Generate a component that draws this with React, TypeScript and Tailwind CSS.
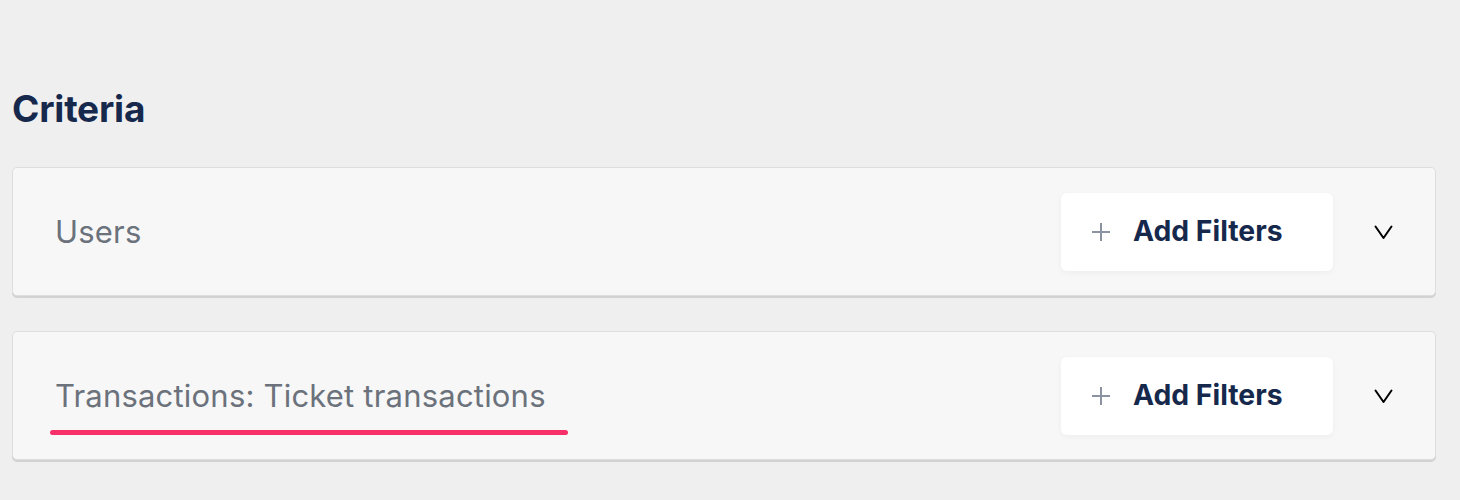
interface CriteriaRowProps {
  label: string;
  active?: boolean;
}

function CriteriaRow({ label, active }: CriteriaRowProps) {
  return (
    <div className="flex h-[129px] items-center rounded-[5px] border border-[#dedede] bg-[#f7f7f7] pl-[42px] pr-[42px] shadow-[0_2px_0_#d2d2d2]">
      <div className="relative flex-1">
        <span className="text-[31px] leading-[40px] tracking-[0.2px] text-[#6b727c]">{label}</span>
        {active && (
          <div className="absolute left-[-5px] top-[54px] h-[5px] w-[518px] rounded-full bg-[#f8306a]" />
        )}
      </div>
      <button className="flex h-[78px] w-[272px] items-center rounded-[6px] bg-white pl-[30px] shadow-[0_2px_6px_rgba(0,0,0,0.04)]">
        <svg width="20" height="20" viewBox="0 0 20 20" fill="none" stroke="#8b93a3" strokeWidth="2">
          <path d="M10 1v18M1 10h18" />
        </svg>
        <span className="ml-[22px] text-[28.3px] font-bold text-[#16294d]">Add Filters</span>
      </button>
      <div className="ml-[40px] flex w-[20px] justify-center">
        <svg width="19" height="16" viewBox="0 0 19 16" fill="none" stroke="#000" strokeWidth="2" strokeLinecap="round" strokeLinejoin="round">
          <path d="M1.5 2.5l8 11.5 8-11.5" />
        </svg>
      </div>
    </div>
  );
}

export default function App() {
  return (
    <div
      className="min-h-[500px] w-[1460px] bg-[#efefef] px-[12px] pt-[86px]"
      style={{ fontFamily: 'Inter, "Noto Sans", sans-serif' }}
    >
      <h2 className="text-[37px] font-bold leading-[46px] tracking-[-0.2px] text-[#16294d]">Criteria</h2>
      <div className="mt-[35px] mr-[12px] flex flex-col gap-[35px]">
        <CriteriaRow label="Users" />
        <CriteriaRow label="Transactions: Ticket transactions" active />
      </div>
    </div>
  );
}
